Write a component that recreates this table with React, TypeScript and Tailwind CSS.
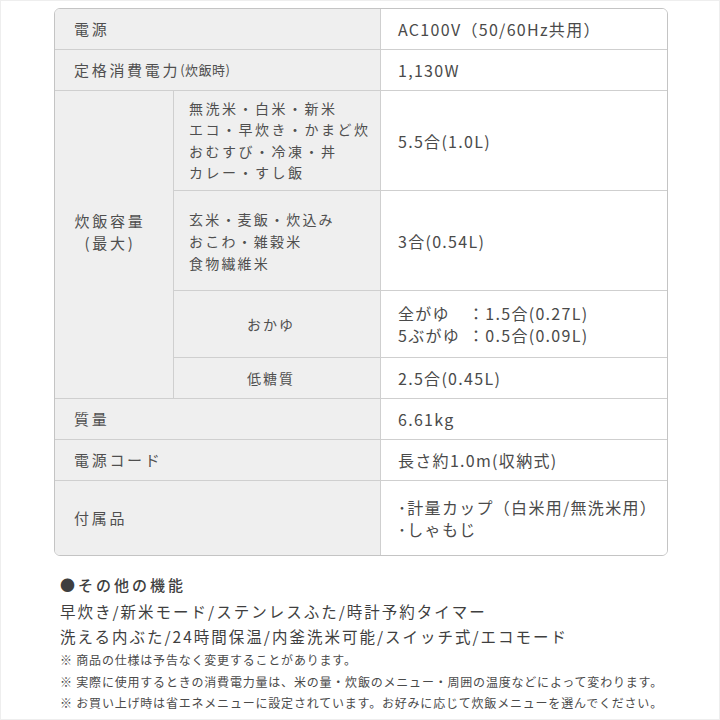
import React from "react";

const font = { fontFamily: '"Noto Sans CJK JP", "Noto Sans", sans-serif' };

function Label({ children, className = "" }: { children: React.ReactNode; className?: string }) {
  return (
    <div className={"bg-[#efefef] flex items-center border-b border-[#cfcfcf] " + className}>{children}</div>
  );
}

function Value({ children, className = "" }: { children: React.ReactNode; className?: string }) {
  return (
    <div className={"bg-white flex items-center pl-[17px] border-l border-b border-[#cfcfcf] text-[16px] tracking-[1.3px] text-[#4a4a4a] " + className}>
      {children}
    </div>
  );
}

export default function App() {
  return (
    <div className="w-[720px] h-[720px] bg-white border border-[#eeeeee] overflow-hidden" style={font}>
      <div className="mt-[7px] ml-[53px] w-[614px] border border-[#c4c4c4] rounded-[6px] overflow-hidden grid grid-cols-[118px_207px_1fr] grid-rows-[41px_41px_100px_100px_67px_41px_41px_41px_74px] text-[#4f4f4f]">
        <Label className="col-span-2 pl-[19px] text-[15px] tracking-[2.7px]">電源</Label>
        <Value>AC100V（50/60Hz共用）</Value>

        <Label className="col-span-2 pl-[19px] text-[15px] tracking-[2.7px]">
          定格消費電力<span className="text-[13px] tracking-[0.5px]">(炊飯時)</span>
        </Label>
        <Value>1,130W</Value>

        <Label className="row-span-4 flex-col justify-center items-center pr-[8px] pb-[26px] text-[15px] tracking-[2.7px] leading-[22px]">
          <span>炊飯容量</span>
          <span>(最大)</span>
        </Label>
        <Label className="border-l pl-[15px] text-[14px] tracking-[2.5px] leading-[21.5px]">
          <div>
            <div>無洗米・白米・新米</div>
            <div>エコ・早炊き・かまど炊</div>
            <div>おむすび・冷凍・丼</div>
            <div>カレー・すし飯</div>
          </div>
        </Label>
        <Value>5.5合(1.0L)</Value>

        <Label className="border-l pl-[15px] text-[14px] tracking-[2.2px] leading-[22px]">
          <div>
            <div>玄米・麦飯・炊込み</div>
            <div>おこわ・雑穀米</div>
            <div>食物繊維米</div>
          </div>
        </Label>
        <Value>3合(0.54L)</Value>

        <Label className="border-l justify-center pr-[12px] text-[14px] tracking-[2px]">おかゆ</Label>
        <Value className="leading-[22px]">
          <div>
            <div className="flex">
              <span className="w-[70px]">全がゆ</span>
              <span>：1.5合(0.27L)</span>
            </div>
            <div className="flex">
              <span className="w-[70px]">5ぶがゆ</span>
              <span>：0.5合(0.09L)</span>
            </div>
          </div>
        </Value>

        <Label className="border-l justify-center pr-[12px] text-[14px] tracking-[2px]">低糖質</Label>
        <Value>2.5合(0.45L)</Value>

        <Label className="col-span-2 pl-[19px] text-[15px] tracking-[2.7px]">質量</Label>
        <Value>6.61kg</Value>

        <Label className="col-span-2 pl-[19px] text-[15px] tracking-[2.7px]">電源コード</Label>
        <Value>長さ約1.0m(収納式)</Value>

        <Label className="col-span-2 pl-[19px] text-[15px] tracking-[2.7px] border-b-0">付属品</Label>
        <Value className="border-b-0 leading-[22px] tracking-[1.1px]">
          <div>
            <div>･計量カップ（白米用/無洗米用）</div>
            <div>･しゃもじ</div>
          </div>
        </Value>
      </div>

      <div className="pl-[59px] mt-[18px] text-[#3f3f3f]">
        <div className="text-[15px] leading-[22px] font-medium tracking-[3px]">●その他の機能</div>
        <div className="text-[15.5px] leading-[25px] tracking-[2px] mt-[3px]">
          <div>早炊き/新米モード/ステンレスふた/時計予約タイマー</div>
          <div>洗える内ぶた/24時間保温/内釜洗米可能/スイッチ式/エコモード</div>
        </div>
        <div className="text-[12px] leading-[21.5px] tracking-[0.8px] text-[#4a4a4a] whitespace-nowrap">
          <div>※ 商品の仕様は予告なく変更することがあります。</div>
          <div>※ 実際に使用するときの消費電力量は、米の量・炊飯のメニュー・周囲の温度などによって変わります。</div>
          <div>※ お買い上げ時は省エネメニューに設定されています。お好みに応じて炊飯メニューを選んでください。</div>
        </div>
      </div>
    </div>
  );
}
